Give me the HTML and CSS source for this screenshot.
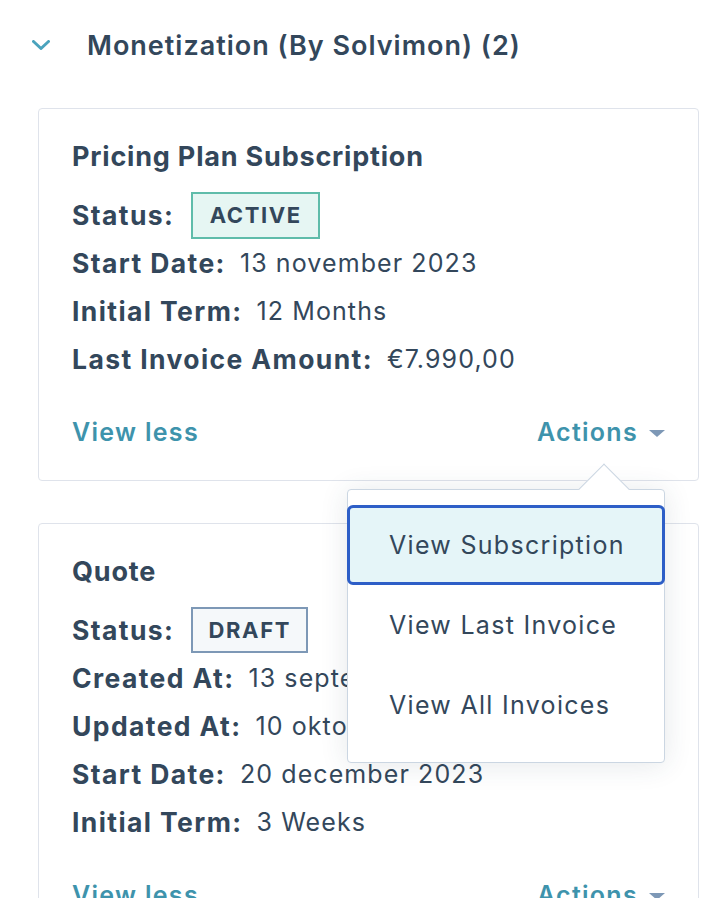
FILE: index.html
```html
<!DOCTYPE html>
<html lang="en">
<head>
<meta charset="utf-8">
<title>Monetization</title>
<link rel="stylesheet" href="styles.css">
</head>
<body>
<div class="page">
  <div class="section-header">
    <svg class="chevron" width="18" height="10" viewBox="0 0 18 10"><path d="M1.5 1.5 L9 8.5 L16.5 1.5" fill="none" stroke="#4aa3bd" stroke-width="3" stroke-linecap="round" stroke-linejoin="round"/></svg>
    <span class="section-title">Monetization (By Solvimon) (2)</span>
  </div>

  <div class="card">
    <div class="card-title">Pricing Plan Subscription</div>
    <div class="row"><span class="label">Status:</span><span class="badge badge-active">ACTIVE</span></div>
    <div class="row"><span class="label">Start Date:</span><span class="value">13 november 2023</span></div>
    <div class="row"><span class="label">Initial Term:</span><span class="value">12 Months</span></div>
    <div class="row"><span class="label">Last Invoice Amount:</span><span class="value">€7.990,00</span></div>
    <div class="card-footer">
      <span class="link">View less</span>
      <span class="actions">
        <span class="link">Actions</span><span class="caret"></span>
        <div class="dropdown">
          <div class="pointer"></div>
          <div class="item item-active">View Subscription</div>
          <div class="item">View Last Invoice</div>
          <div class="item">View All Invoices</div>
        </div>
      </span>
    </div>
  </div>

  <div class="card card-second">
    <div class="card-title">Quote</div>
    <div class="row"><span class="label">Status:</span><span class="badge badge-draft">DRAFT</span></div>
    <div class="row"><span class="label">Created At:</span><span class="value">13 september 2023</span></div>
    <div class="row"><span class="label">Updated At:</span><span class="value">10 oktober 2023</span></div>
    <div class="row"><span class="label">Start Date:</span><span class="value">20 december 2023</span></div>
    <div class="row"><span class="label">Initial Term:</span><span class="value">3 Weeks</span></div>
    <div class="card-footer">
      <span class="link">View less</span>
      <span class="actions"><span class="link">Actions</span><span class="caret"></span></span>
    </div>
  </div>
</div>
</body>
</html>
```

FILE: styles.css
```css
html, body {
  margin: 0;
  padding: 0;
  background: #ffffff;
}
body {
  font-family: "Inter", "Liberation Sans", sans-serif;
  color: #33475b;
  overflow: hidden;
  height: 898px;
}
.page {
  padding: 30px 27px 0 38px;
}
.section-header {
  display: flex;
  align-items: center;
  height: 32px;
  margin-bottom: 46px;
  margin-left: -6px;
}
.chevron {
  display: block;
  width: 18px;
  height: 10px;
  margin-right: 37px;
  margin-top: -2px;
}
.section-title {
  font-size: 27px;
  font-weight: 600;
  line-height: 32px;
  letter-spacing: 1px;
}
.card {
  border: 1px solid #dfe3eb;
  border-radius: 4px;
  padding: 32px 33px;
  background: #fff;
}
.card-second {
  margin-top: 42px;
}
.card-title {
  font-size: 27px;
  font-weight: 700;
  line-height: 32px;
  letter-spacing: 0.8px;
  margin-bottom: 18px;
}
.row {
  display: flex;
  align-items: center;
  height: 48px;
}
.label {
  font-size: 26.5px;
  font-weight: 700;
  letter-spacing: 1.4px;
}
.value {
  font-size: 25px;
  font-weight: 400;
  letter-spacing: 1.1px;
  margin-left: 14px;
}
.badge {
  box-sizing: border-box;
  height: 47px;
  margin-left: 17px;
  display: inline-flex;
  align-items: center;
  justify-content: center;
  border: 2px solid;
  font-size: 22px;
  font-weight: 700;
  letter-spacing: 1.6px;
}
.badge-active {
  width: 129px;
  border-color: #5fbcaa;
  background: #e6f6f3;
}
.badge-draft {
  width: 117px;
  height: 46px;
  border-color: #7d98b6;
  background: #f5f8fa;
}
.card-footer {
  display: flex;
  justify-content: space-between;
  align-items: center;
  margin-top: 33px;
  height: 32px;
}
.link {
  color: #3e93ac;
  font-size: 25px;
  font-weight: 600;
  line-height: 32px;
  letter-spacing: 1.3px;
}
.actions {
  position: relative;
  display: flex;
  align-items: center;
}
.caret {
  width: 0;
  height: 0;
  border-left: 8px solid transparent;
  border-right: 8px solid transparent;
  border-top: 7px solid #7d98b6;
  margin-left: 11px;
  margin-top: 2px;
}
.dropdown {
  position: absolute;
  top: calc(100% + 41px);
  right: 0;
  width: 318px;
  box-sizing: border-box;
  border: 1px solid #cbd6e2;
  border-radius: 4px;
  background: #fff;
  padding: 15px 0 17px;
  box-shadow: 0 2px 28px rgba(45, 62, 80, 0.12);
  z-index: 10;
}
.pointer {
  position: absolute;
  left: 238px;
  top: -19px;
  width: 36px;
  height: 36px;
  background: #fff;
  border-top: 1px solid #cbd6e2;
  border-left: 1px solid #cbd6e2;
  transform: rotate(45deg);
  box-sizing: border-box;
}
.item {
  position: relative;
  box-sizing: border-box;
  height: 80px;
  display: flex;
  align-items: center;
  padding-left: 41px;
  font-size: 25px;
  font-weight: 400;
  letter-spacing: 1.3px;
  color: #33475b;
  white-space: nowrap;
}
.item-active {
  margin: 0 -1px;
  border: 3px solid #2d5ec7;
  border-radius: 6px;
  background: #e5f5f8;
  padding-left: 39px;
}
```
